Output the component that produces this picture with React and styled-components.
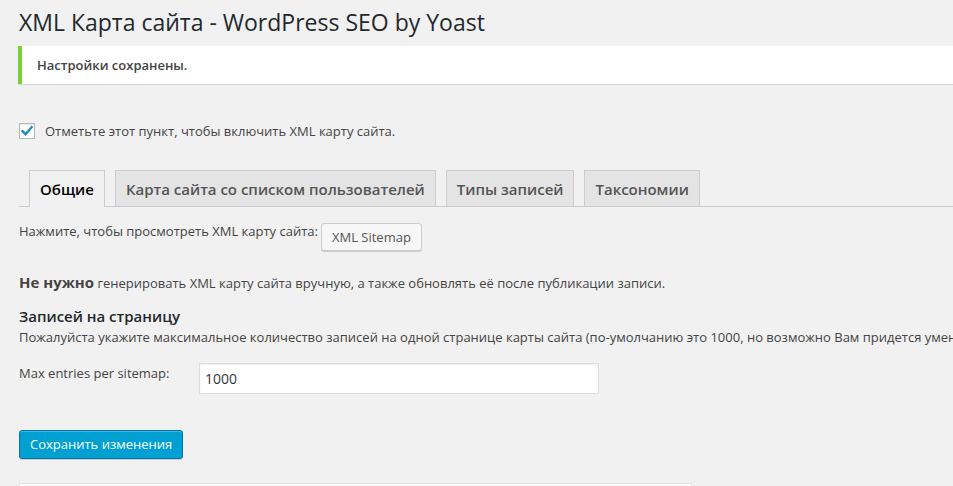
import React from "react";
import styled, { createGlobalStyle } from "styled-components";

const Global = createGlobalStyle`
  html, body { margin: 0; padding: 0; background: #f1f1f1; overflow: hidden; }
  body { font-family: "Open Sans", "Noto Sans", sans-serif; color: #444; font-size: 13px; }
`;

const Wrap = styled.div`
  padding: 8px 0 0 19px;
  width: 934px;
  overflow: hidden;
`;

const Title = styled.h1`
  margin: 0;
  font-size: 23px;
  font-weight: 400;
  line-height: 29px;
  color: #23282d;
`;

const Notice = styled.div`
  margin: 9px -40px 0 -1px;
  background: #fff;
  border-left: 4px solid #7ad03a;
  box-shadow: 0 1px 1px rgba(0, 0, 0, 0.1);
  padding: 10px 0 9px 15px;
  font-size: 13px;
  line-height: 19px;
  font-weight: 600;
  color: #444;
`;

const CheckRow = styled.label`
  display: flex;
  align-items: center;
  gap: 10px;
  margin-top: 38px;
  line-height: 16px;
`;

const CheckText = styled.span`
  padding-top: 1px;
`;

const Box = styled.span`
  width: 16px;
  height: 16px;
  box-sizing: border-box;
  border: 1px solid #b4b9be;
  background: #fff;
  box-shadow: inset 0 1px 2px rgba(0, 0, 0, 0.1);
  display: flex;
  align-items: center;
  justify-content: center;
`;

const Tabs = styled.div`
  display: flex;
  gap: 10px;
  padding-left: 10px;
  margin-top: 30px;
  border-bottom: 1px solid #ccc;
  height: 37px;
  align-items: flex-end;
`;

const Tab = styled.div`
  border: 1px solid #ccc;
  border-bottom: none;
  background: ${(p) => (p.$active ? "#f1f1f1" : "#e4e4e4")};
  color: ${(p) => (p.$active ? "#000" : "#555")};
  padding: 6px 10px 6px;
  font-size: 15px;
  line-height: 24px;
  font-weight: 600;
  margin-bottom: ${(p) => (p.$active ? "-1px" : "0")};
  height: ${(p) => (p.$active ? "37px" : "36px")};
  box-sizing: border-box;
  white-space: nowrap;
`;

const SitemapRow = styled.div`
  display: flex;
  align-items: flex-start;
  gap: 3px;
  margin-top: 16px;
`;

const RowText = styled.span`
  line-height: 16px;
`;

const Button = styled.button`
  font-family: inherit;
  font-size: 13px;
  height: 28px;
  line-height: 26px;
  padding: 0 10px 1px;
  border: 1px solid #ccc;
  border-radius: 3px;
  background: #f7f7f7;
  color: #555;
  box-shadow: 0 1px 0 #ccc;
  margin-top: 0;
`;

const Para = styled.p`
  margin: 21px 0 0;
  line-height: 20px;
  white-space: nowrap;
  strong {
    font-size: 15px;
    font-weight: 700;
    color: #444;
  }
`;

const Heading = styled.h2`
  margin: 13px 0 0;
  font-size: 15px;
  font-weight: 600;
  line-height: 20px;
  color: #23282d;
`;

const Desc = styled.p`
  margin: 1px 0 0;
  line-height: 20px;
  white-space: nowrap;
`;

const FieldRow = styled.div`
  display: flex;
  align-items: flex-start;
  margin-top: 17px;
`;

const Label = styled.label`
  width: 180px;
  line-height: 18px;
  flex-shrink: 0;
`;

const Input = styled.input`
  width: 400px;
  height: 31px;
  box-sizing: border-box;
  border: 1px solid #ddd;
  box-shadow: inset 0 1px 2px rgba(0, 0, 0, 0.07);
  background: #fff;
  font-family: inherit;
  font-size: 14px;
  color: #32373c;
  padding: 0 5px;
  margin: -1px 0 0;
  outline: none;
`;

const Primary = styled.button`
  margin-top: 36px;
  font-family: inherit;
  font-size: 13px;
  height: 29px;
  line-height: 26px;
  padding: 0 10px 1px;
  background: #00a0d2;
  border: 1px solid #0073aa;
  border-radius: 3px;
  color: #fff;
  box-shadow: inset 0 1px 0 rgba(120, 200, 230, 0.5), 0 1px 0 rgba(0, 0, 0, 0.15);
  display: block;
`;

const BottomBox = styled.div`
  margin-top: 24px;
  width: 671px;
  height: 20px;
  background: #fff;
  border: 1px solid #e5e5e5;
  box-shadow: 0 1px 1px rgba(0, 0, 0, 0.04);
`;

export default function App() {
  return (
    <>
      <Global />
      <Wrap>
        <Title>XML Карта сайта - WordPress SEO by Yoast</Title>
        <Notice>Настройки сохранены.</Notice>
        <CheckRow>
          <Box>
            <svg width="14" height="14" viewBox="0 0 14 14">
              <path d="M2.5 7.2 L5.6 10.2 L11.6 3.2" fill="none" stroke="#1e8cbe" strokeWidth="2.4" strokeLinecap="square" />
            </svg>
          </Box>
          <CheckText>Отметьте этот пункт, чтобы включить XML карту сайта.</CheckText>
        </CheckRow>
        <Tabs>
          <Tab $active>Общие</Tab>
          <Tab>Карта сайта со списком пользователей</Tab>
          <Tab>Типы записей</Tab>
          <Tab>Таксономии</Tab>
        </Tabs>
        <SitemapRow>
          <RowText>Нажмите, чтобы просмотреть XML карту сайта:</RowText>
          <Button>XML Sitemap</Button>
        </SitemapRow>
        <Para>
          <strong>Не нужно</strong> генерировать XML карту сайта вручную, а также обновлять её после публикации записи.
        </Para>
        <Heading>Записей на страницу</Heading>
        <Desc>
          Пожалуйста укажите максимальное количество записей на одной странице карты сайта (по-умолчанию это 1000, но возможно Вам придется уменьшить это значение, если карта сайта не загружается).
        </Desc>
        <FieldRow>
          <Label>Max entries per sitemap:</Label>
          <Input defaultValue="1000" />
        </FieldRow>
        <Primary>Сохранить изменения</Primary>
        <BottomBox />
      </Wrap>
    </>
  );
}
